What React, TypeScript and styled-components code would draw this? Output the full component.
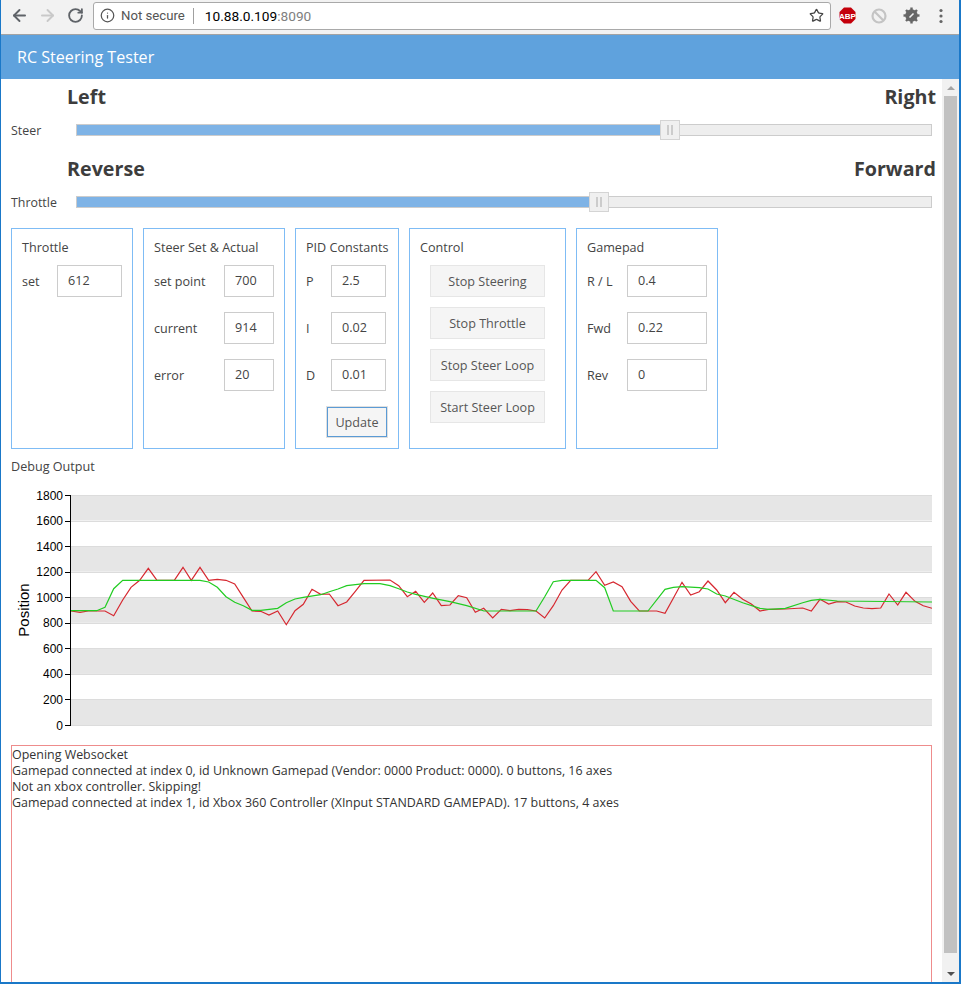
import React from 'react';
import styled, { createGlobalStyle } from 'styled-components';
import { ArrowLeft, ArrowRight, RotateCw, Info, Star } from 'lucide-react';

const GlobalStyle = createGlobalStyle`
	html, body {
		margin: 0;
		height: 100%;
		overflow: hidden;
		background: #fff;
	}
	body {
		font-family: "Open Sans", "Liberation Sans", sans-serif;
		color: #444;
	}
	* { box-sizing: border-box; }
`;

const red = [
	[71, 611], [80, 612.3], [88.3, 611], [105, 611], [113.7, 615.7], [122.7, 600], [131, 587.3], [139.7, 580.3],
	[148.3, 568.3], [157, 580.3], [174.3, 580.3], [183, 567.3], [191.3, 580.3], [200, 567.3], [208.7, 580.3],
	[217.3, 579.3], [226, 580.3], [234.7, 584], [243.3, 597.3], [252, 611], [260.7, 611.3], [269, 615],
	[277.7, 611], [286.3, 624.7], [295, 610.7], [303.3, 604.3], [312, 589.3], [320.7, 594.3], [329.3, 594],
	[338, 605.7], [346.7, 602], [355.3, 591.3], [364, 580.3], [390, 580], [398.7, 585.7], [407.3, 596.7],
	[415.7, 591.3], [424.3, 602.3], [432.7, 593], [441.3, 605.7], [450, 605], [458.3, 595.7], [466.7, 597.7],
	[475.3, 612.3], [483.7, 608.3], [492.7, 618], [501.3, 609.3], [510, 610.7], [518.7, 609.3], [527.3, 609.7],
	[536, 611], [544.7, 618], [553.3, 605.7], [562, 590], [570.7, 580.3], [588, 580.3], [596, 571.7],
	[604.7, 585.3], [613.3, 582], [622, 586.7], [630.7, 601.3], [639.3, 611], [656.7, 611], [665, 613.3],
	[673.3, 598.3], [682, 582.3], [690.7, 595], [699.3, 591.7], [708, 581], [716.7, 590], [725.3, 602.7],
	[734, 592.3], [742.7, 599.3], [751.3, 604], [760, 611], [768.7, 609.3], [785.3, 609], [802.7, 608],
	[811.3, 611], [820, 599.3], [828.7, 604], [837.3, 601.7], [846, 602], [854.7, 606], [863.3, 608],
	[872, 608.7], [880.7, 608], [889, 594], [897.7, 605], [906, 592.3], [915, 601.3], [923.3, 605.7], [932, 608.3],
];

const green = [
	[71, 610.7], [96.7, 610.7], [105, 607.3], [113.7, 588.7], [122.7, 580.3], [200, 580.3], [208.7, 582],
	[217.3, 587.3], [226, 596.7], [234.7, 602.3], [243.3, 605.7], [252, 610.3], [260.7, 610.3], [277.7, 608.3],
	[286.3, 602.7], [295, 599], [303.3, 597.3], [320.7, 594.7], [329.3, 591.7], [338, 589], [346.7, 585.7],
	[355.3, 584.7], [364, 583.7], [380, 583.7], [390, 585.7], [398.7, 588.7], [407.3, 592], [415.7, 594.3],
	[433.3, 598.3], [450, 601.7], [466.7, 605.7], [484, 611], [536, 611], [544.7, 596.7], [553.3, 581.7],
	[562, 580.3], [596, 580.3], [604.7, 587.7], [613.3, 611], [648, 611], [665, 589.3], [673.3, 587.3],
	[682, 586.7], [699.3, 587.7], [708, 589], [716.7, 594], [725.3, 596], [742.7, 602.7], [760, 608.3],
	[768.7, 609.3], [785.3, 608.3], [802.7, 602.7], [811.3, 600.3], [820, 599.3], [837.3, 601], [932, 602],
];

const ticks = [1800, 1600, 1400, 1200, 1000, 800, 600, 400, 200, 0];
const tickY = (v: number) => 725 - (v / 1800) * 230;
const toPoints = (pts: number[][]) => pts.map(p => p.join(',')).join(' ');

const logLines = [
	'Opening Websocket',
	'Gamepad connected at index 0, id Unknown Gamepad (Vendor: 0000 Product: 0000). 0 buttons, 16 axes',
	'Not an xbox controller. Skipping!',
	'Gamepad connected at index 1, id Xbox 360 Controller (XInput STANDARD GAMEPAD). 17 buttons, 4 axes',
];

function Slider({ label, value }: { label: string; value: number }) {
	return (
		<SliderRow>
			<SliderLabel>{label}</SliderLabel>
			<Track>
				<Fill style={{ width: `${value * 100}%` }} />
				<Handle style={{ left: `${value * 100}%` }} />
			</Track>
		</SliderRow>
	);
}

function Field({ label, value, labelWidth, inputWidth }: { label: string; value: string; labelWidth: number; inputWidth: number }) {
	return (
		<FieldRow $labelWidth={labelWidth} $inputWidth={inputWidth}>
			<span>{label}</span>
			<ValueBox>{value}</ValueBox>
		</FieldRow>
	);
}

function Chart() {
	return (
		<ChartSvg viewBox="11 485 921 250" width={921} height={250}>
			{ticks.slice(0, -1).map((t, i) => i % 2 === 0 && (
				<rect key={t} x={71} y={tickY(t)} width={861} height={tickY(ticks[i + 1]) - tickY(t)} fill="#e6e6e6" />
			))}
			{ticks.map(t => (
				<g key={t}>
					<line x1={71} x2={932} y1={Math.round(tickY(t)) + 0.5} y2={Math.round(tickY(t)) + 0.5} stroke="#dcdcdc" />
					<line x1={65} x2={70} y1={Math.round(tickY(t)) + 0.5} y2={Math.round(tickY(t)) + 0.5} stroke="#000" />
					<AxisText x={63} y={tickY(t) + 4.5} textAnchor="end">{t}</AxisText>
				</g>
			))}
			<line x1={70.5} x2={70.5} y1={495} y2={726} stroke="#000" />
			<AxisTitle transform="translate(29 610) rotate(-90)" textAnchor="middle">Position</AxisTitle>
			<polyline points={toPoints(red)} fill="none" stroke="#d62830" strokeWidth={1.2} />
			<polyline points={toPoints(green)} fill="none" stroke="#22cc22" strokeWidth={1.2} />
		</ChartSvg>
	);
}

export default function App() {
	return (
		<Frame>
			<GlobalStyle />
			<Toolbar>
				<NavButton><ArrowLeft size={19} strokeWidth={2.4} color="#5f6368" /></NavButton>
				<NavButton><ArrowRight size={19} strokeWidth={2.4} color="#c9c9c9" /></NavButton>
				<NavButton><RotateCw size={17} strokeWidth={2.6} color="#5f6368" /></NavButton>
				<Omnibox>
					<Info size={15} strokeWidth={2} color="#555" />
					<Security>Not secure</Security>
					<Divider />
					<Url>10.88.0.109<span>:8090</span></Url>
					<StarSlot><Star size={15} strokeWidth={2} color="#444" /></StarSlot>
				</Omnibox>
				<ExtButton>
					<svg width="17" height="17" viewBox="0 0 17 17">
						<polygon points="5,0.5 12,0.5 16.5,5 16.5,12 12,16.5 5,16.5 0.5,12 0.5,5" fill="#c4000b" />
						<AbpText x="8.5" y="11.5" textAnchor="middle">ABP</AbpText>
					</svg>
				</ExtButton>
				<ExtButton>
					<svg width="16" height="16" viewBox="0 0 16 16">
						<circle cx="8" cy="8" r="6.5" fill="none" stroke="#c4c4c4" strokeWidth="2.2" />
						<line x1="3.5" y1="3.5" x2="12.5" y2="12.5" stroke="#c4c4c4" strokeWidth="2.2" />
					</svg>
				</ExtButton>
				<ExtButton>
					<svg width="17" height="17" viewBox="0 0 17 17">
						<g stroke="#666" strokeWidth="2.4">
							<line x1="8.5" y1="0.5" x2="8.5" y2="16.5" />
							<line x1="0.5" y1="8.5" x2="16.5" y2="8.5" />
							<line x1="3" y1="3" x2="14" y2="14" />
							<line x1="14" y1="3" x2="3" y2="14" />
						</g>
						<circle cx="8.5" cy="8.5" r="6.2" fill="#666" />
						<line x1="6.5" y1="10.5" x2="10.5" y2="6.5" stroke="#f2f2f2" strokeWidth="1.6" />
					</svg>
				</ExtButton>
				<MenuButton>
					<svg width="4" height="16" viewBox="0 0 4 16">
						<circle cx="2" cy="2.5" r="1.6" fill="#666" />
						<circle cx="2" cy="8" r="1.6" fill="#666" />
						<circle cx="2" cy="13.5" r="1.6" fill="#666" />
					</svg>
				</MenuButton>
			</Toolbar>
			<Header>RC Steering Tester</Header>
			<Body>
				<Main>
					<LimitRow><span>Left</span><span>Right</span></LimitRow>
					<Slider label="Steer" value={0.694} />
					<LimitRow $gap><span>Reverse</span><span>Forward</span></LimitRow>
					<Slider label="Throttle" value={0.611} />

					<Panels>
						<Panel $width={122}>
							<PanelTitle>Throttle</PanelTitle>
							<Field label="set" value="612" labelWidth={35} inputWidth={65} />
						</Panel>
						<Panel $width={142}>
							<PanelTitle>Steer Set &amp; Actual</PanelTitle>
							<Field label="set point" value="700" labelWidth={70} inputWidth={50} />
							<Field label="current" value="914" labelWidth={70} inputWidth={50} />
							<Field label="error" value="20" labelWidth={70} inputWidth={50} />
						</Panel>
						<Panel $width={104}>
							<PanelTitle>PID Constants</PanelTitle>
							<Field label="P" value="2.5" labelWidth={25} inputWidth={55} />
							<Field label="I" value="0.02" labelWidth={25} inputWidth={55} />
							<Field label="D" value="0.01" labelWidth={25} inputWidth={55} />
							<UpdateButton>Update</UpdateButton>
						</Panel>
						<Panel $width={157}>
							<PanelTitle>Control</PanelTitle>
							<ControlList>
								<ControlButton>Stop Steering</ControlButton>
								<ControlButton>Stop Throttle</ControlButton>
								<ControlButton>Stop Steer Loop</ControlButton>
								<ControlButton>Start Steer Loop</ControlButton>
							</ControlList>
						</Panel>
						<Panel $width={142}>
							<PanelTitle>Gamepad</PanelTitle>
							<Field label="R / L" value="0.4" labelWidth={40} inputWidth={80} />
							<Field label="Fwd" value="0.22" labelWidth={40} inputWidth={80} />
							<Field label="Rev" value="0" labelWidth={40} inputWidth={80} />
						</Panel>
					</Panels>

					<DebugTitle>Debug Output</DebugTitle>
					<Chart />
					<LogBox>
						{logLines.map(l => <div key={l}>{l}</div>)}
					</LogBox>
				</Main>
				<Scrollbar>
					<ScrollArrow $up />
					<ScrollTrack><ScrollThumb /></ScrollTrack>
					<ScrollArrow />
				</Scrollbar>
			</Body>
		</Frame>
	);
}

const Frame = styled.div`
	display: flex;
	flex-direction: column;
	width: 961px;
	height: 984px;
	overflow: hidden;
	border-left: 1px solid #1a78c8;
	border-right: 2px solid #1a78c8;
	border-bottom: 2px solid #1a78c8;
`;

const Toolbar = styled.div`
	display: flex;
	align-items: center;
	flex: none;
	height: 35px;
	padding: 0 4px 3px 4px;
	background: #f2f2f2;
	border-bottom: 1px solid #a3a3a3;
	font-family: Roboto, "Liberation Sans", sans-serif;
`;

const NavButton = styled.div`
	display: flex;
	align-items: center;
	justify-content: center;
	width: 28px;
	height: 28px;
`;

const Omnibox = styled.div`
	display: flex;
	align-items: center;
	width: 738px;
	height: 28px;
	margin-left: 4px;
	padding: 0 5px 0 6px;
	background: #fff;
	border: 1px solid #a9a9a9;
	border-radius: 3px;
`;

const Security = styled.span`
	margin-left: 6px;
	font-size: 13.2px;
	color: #555;
`;

const Divider = styled.span`
	width: 1px;
	height: 16px;
	margin: 0 11px 0 8px;
	background: #a0a0a0;
`;

const Url = styled.span`
	flex: 1;
	font-size: 13.7px;
	color: #000;
	span { color: #808080; }
`;

const StarSlot = styled.span`
	display: flex;
	margin-right: 1px;
`;

const ExtButton = styled.div`
	display: flex;
	align-items: center;
	justify-content: center;
	width: 32px;
	height: 28px;
`;

const MenuButton = styled(ExtButton)`
	width: 28px;
`;

const AbpText = styled.text`
	font-family: "Liberation Sans", sans-serif;
	font-size: 8px;
	font-weight: 700;
	fill: #fff;
`;

const Header = styled.div`
	flex: none;
	display: flex;
	align-items: center;
	height: 44px;
	padding-left: 16px;
	background: #5fa2dd;
	color: #fff;
	font-size: 16.1px;
`;

const Body = styled.div`
	display: flex;
	flex: 1;
	min-height: 0;
`;

const Main = styled.div`
	flex: 1;
	min-width: 0;
	overflow: hidden;
	background: #fff;
	font-size: 12.6px;
`;

const LimitRow = styled.div<{ $gap?: boolean }>`
	display: flex;
	justify-content: space-between;
	align-items: center;
	height: 36px;
	margin-top: ${props => (props.$gap ? '6px' : '0')};
	padding: 0 6px 2px 66px;
	color: #3d3d3d;
	font-size: 19.7px;
	font-weight: 700;
`;

const SliderRow = styled.div`
	display: flex;
	align-items: center;
	height: 30px;
	padding: 0 10px;
`;

const SliderLabel = styled.span`
	width: 65px;
	font-size: 12.4px;
`;

const Track = styled.div`
	position: relative;
	flex: 1;
	height: 12px;
	background: #eee;
	border: 1px solid #ccc;
`;

const Fill = styled.div`
	height: 100%;
	background: #7eb3e6;
`;

const Handle = styled.div`
	position: absolute;
	top: -5px;
	width: 20px;
	height: 20px;
	margin-left: -10px;
	background: #f0f0f0;
	border: 1px solid #d4d4d4;

	&::before {
		content: '';
		box-sizing: border-box;
		position: absolute;
		left: 6px;
		top: 4px;
		width: 6px;
		height: 10px;
		border-left: 2px solid #ccc;
		border-right: 2px solid #ccc;
	}
`;

const Panels = styled.div`
	display: flex;
	gap: 10px;
	margin-top: 11px;
	padding-left: 10px;
`;

const Panel = styled.div<{ $width: number }>`
	width: ${props => props.$width}px;
	height: 221px;
	padding: 10px;
	border: 1px solid #7fbcf5;
	font-size: 12.6px;
	color: #444;
`;

const PanelTitle = styled.div`
	height: 18px;
	margin-bottom: 8px;
	line-height: 17px;
	white-space: nowrap;
`;

const FieldRow = styled.div<{ $labelWidth: number; $inputWidth: number }>`
	display: grid;
	grid-template-columns: ${props => props.$labelWidth}px ${props => props.$inputWidth}px;
	align-items: center;
	margin-bottom: 15px;
`;

const ValueBox = styled.div`
	height: 32px;
	padding-left: 10px;
	line-height: 30px;
	background: #fff;
	border: 1px solid #ccc;
`;

const UpdateButton = styled.div`
	display: flex;
	align-items: center;
	justify-content: center;
	width: 60px;
	height: 30px;
	margin: 16px 0 0 21px;
	background: #f5f5f5;
	border: 1px solid #5b9bd5;
	outline: 1px solid #e0e0e0;
	color: #555;
`;

const ControlList = styled.div`
	display: flex;
	flex-direction: column;
	gap: 10px;
	margin-left: 10px;
`;

const ControlButton = styled.div`
	display: flex;
	align-items: center;
	justify-content: center;
	width: 115px;
	height: 32px;
	background: #f5f5f5;
	border: 1px solid #e6e6e6;
	color: #555;
	white-space: nowrap;
`;

const DebugTitle = styled.div`
	height: 18px;
	margin: 9px 0 0 10px;
	line-height: 17px;
`;

const ChartSvg = styled.svg`
	display: block;
	margin: 9px 0 0 10px;
`;

const AxisText = styled.text`
	font-family: "Liberation Sans", sans-serif;
	font-size: 12px;
	fill: #000;
`;

const AxisTitle = styled.text`
	font-family: "Liberation Sans", sans-serif;
	font-size: 15px;
	fill: #000;
`;

const LogBox = styled.div`
	width: 921px;
	height: 300px;
	margin: 10px 0 0 10px;
	padding: 1px 0 0 0;
	border: 1px solid #ee8c8c;
	color: #333;
	font-size: 12.45px;
	line-height: 16px;
	white-space: nowrap;
`;

const Scrollbar = styled.div`
	display: flex;
	flex-direction: column;
	flex: none;
	width: 17px;
	background: #f1f1f1;
`;

const ScrollArrow = styled.div<{ $up?: boolean }>`
	display: flex;
	align-items: center;
	justify-content: center;
	flex: none;
	height: 17px;

	&::before {
		content: '';
		border-left: 4px solid transparent;
		border-right: 4px solid transparent;
		${props => (props.$up ? 'border-bottom: 4px solid #a3a3a3;' : 'border-top: 4px solid #505050;')}
	}
`;

const ScrollTrack = styled.div`
	flex: 1;
	min-height: 0;
	padding: 0 2px;
`;

const ScrollThumb = styled.div`
	height: 857px;
	background: #c1c1c1;
`;
